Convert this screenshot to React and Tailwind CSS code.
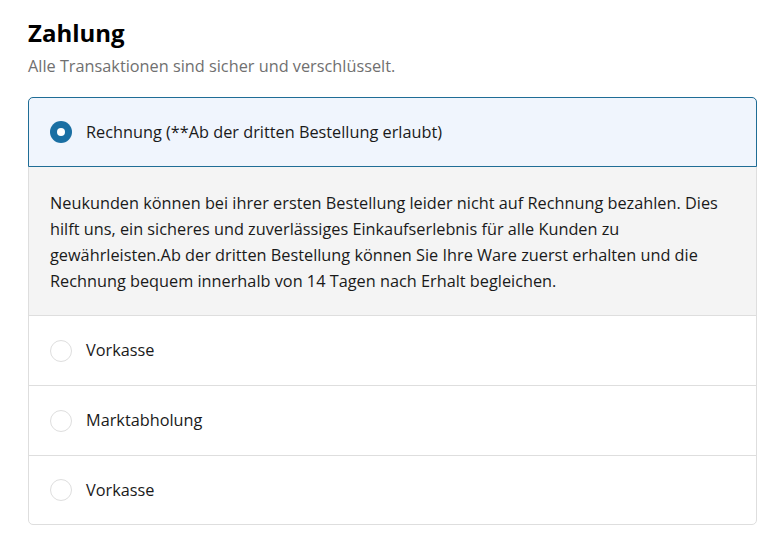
import { useState } from 'react';

const options = [
  { id: 'rechnung', label: 'Rechnung (**Ab der dritten Bestellung erlaubt)' },
  { id: 'vorkasse', label: 'Vorkasse' },
  { id: 'markt', label: 'Marktabholung' },
  { id: 'vorkasse2', label: 'Vorkasse' },
];

function Radio({ checked }) {
  return checked ? (
    <span className="flex h-[22px] w-[22px] shrink-0 items-center justify-center rounded-full bg-[#1a6fa3]">
      <span className="h-[8px] w-[8px] rounded-full bg-white" />
    </span>
  ) : (
    <span className="h-[22px] w-[22px] shrink-0 rounded-full border border-[#dedede] bg-white" />
  );
}

export default function App() {
  const [selected, setSelected] = useState('rechnung');

  return (
    <div className="min-h-[540px] bg-white pl-[28px] pr-[14px] pt-[16px] font-['Open_Sans',sans-serif] text-[#1a1a1a]">
      <h2 className="text-[24px] font-bold leading-[34px] text-black">Zahlung</h2>
      <p className="mt-[5px] text-[16.3px] leading-[23px] text-[#707070]">
        Alle Transaktionen sind sicher und verschlüsselt.
      </p>

      <div className="mt-[19px] rounded-[5px] border border-[#dedede]">
        {options.map((opt, i) => {
          const active = selected === opt.id;
          const last = i === options.length - 1;
          return (
            <div key={opt.id} className={i > 0 ? 'border-t border-[#dedede]' : ''}>
              <div
                onClick={() => setSelected(opt.id)}
                className={
                  active
                    ? 'relative -mx-px -mt-px flex h-[70px] cursor-pointer items-center gap-[14px] rounded-t-[5px] border border-[#1f6d96] bg-[#f0f5fd] px-[21px] text-[16.3px]'
                    : last
                      ? 'flex h-[68px] cursor-pointer items-center gap-[14px] rounded-b-[5px] px-[21px] text-[16.3px]'
                      : 'flex h-[69px] cursor-pointer items-center gap-[14px] px-[21px] text-[16.3px]'
                }
              >
                <Radio checked={active} />
                <span>{opt.label}</span>
              </div>
              {active && opt.id === 'rechnung' && (
                <div className="bg-[#f4f4f4] px-[21px] pb-[21px] pt-[23px] text-[16.3px] leading-[26px] text-[#1a1a1a]">
                  Neukunden können bei ihrer ersten Bestellung leider nicht auf Rechnung bezahlen. Dies
                  <br />
                  hilft uns, ein sicheres und zuverlässiges Einkaufserlebnis für alle Kunden zu
                  <br />
                  gewährleisten.Ab der dritten Bestellung können Sie Ihre Ware zuerst erhalten und die
                  <br />
                  Rechnung bequem innerhalb von 14 Tagen nach Erhalt begleichen.
                </div>
              )}
            </div>
          );
        })}
      </div>
    </div>
  );
}
